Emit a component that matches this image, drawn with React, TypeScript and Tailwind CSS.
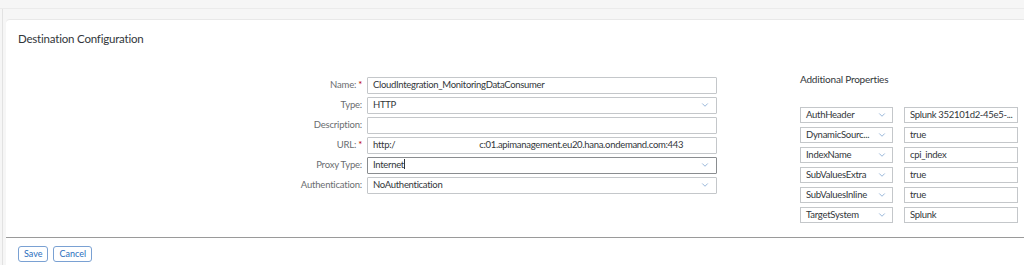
import { ChevronDown } from 'lucide-react'

const FONT = { fontFamily: 'Lato, "Liberation Sans", Arial, sans-serif' }

type Row = { label: string; value: string; required?: boolean; select?: boolean; focus?: boolean }

const ROWS: Row[] = [
  { label: 'Name:', value: 'CloudIntegration_MonitoringDataConsumer', required: true },
  { label: 'Type:', value: 'HTTP', select: true },
  { label: 'Description:', value: '' },
  { label: 'URL:', value: 'url', required: true },
  { label: 'Proxy Type:', value: 'Internet', select: true, focus: true },
  { label: 'Authentication:', value: 'NoAuthentication', select: true },
]

const PROPS: [string, string][] = [
  ['AuthHeader', 'Splunk 352101d2-45e5-...'],
  ['DynamicSourc...', 'true'],
  ['IndexName', 'cpi_index'],
  ['SubValuesExtra', 'true'],
  ['SubValuesInline', 'true'],
  ['TargetSystem', 'Splunk'],
]

function Field({ row }: { row: Row }) {
  return (
    <div className="flex h-[20px] items-center">
      <div className="flex w-[72px] justify-end pr-[5px] text-[9.5px] tracking-[-0.2px] text-[#6a6d70]">
        {row.label}
        {row.required && <span className="ml-[2px] text-[#bb0000]">*</span>}
      </div>
      <div
        className={
          'flex h-[17px] w-[350px] items-center rounded-[1px] border bg-white pl-[5px] pr-[6px] text-[9.5px] tracking-[-0.3px] text-[#32363a] ' +
          (row.focus ? 'border-[#8a8d90]' : 'border-[#c4c7ca]')
        }
      >
        {row.value === 'url' ? (
          <>
            <span>http:/</span>
            <span className="ml-[84px]">c:01.apimanagement.eu20.hana.ondemand.com:443</span>
          </>
        ) : (
          <span>
            {row.value}
            {row.focus && <span className="ml-[0.5px] inline-block h-[10px] w-px translate-y-[1px] bg-[#32363a]" />}
          </span>
        )}
        {row.select && <ChevronDown className="ml-auto size-[10px] text-[#5b8bc4]" strokeWidth={1.5} />}
      </div>
    </div>
  )
}

export default function App() {
  return (
    <div className="h-[265px] w-[1024px] overflow-hidden bg-[#f6f6f6]" style={FONT}>
      <div className="h-[9px] border-b border-[#ebebeb]" />
      <div className="flex h-[256px]">
        <div className="w-[2px]" />
        <div className="w-px bg-[#e2e2e2]" />
        <div className="flex flex-1 flex-col pl-[3px] pt-[10px]">
          <div className="flex flex-1 flex-col rounded-tl-[4px] border-t border-[#e8e8e8] bg-white">
            <div className="px-[12px] pt-[10px] text-[11.5px] tracking-[-0.2px] text-[#32363a]">Destination Configuration</div>

            <div className="flex flex-1">
              <div className="flex flex-col pl-[289px] pt-[28px]">
                {ROWS.map((r) => (
                  <Field key={r.label} row={r} />
                ))}
              </div>

              <div className="flex flex-col pl-[83px] pt-[25px]">
                <div className="text-[10px] tracking-[-0.2px] text-[#32363a]">Additional Properties</div>
                <div className="mt-[18px] flex flex-col">
                  {PROPS.map(([k, v]) => (
                    <div key={k} className="flex h-[20px] items-center gap-[11px]">
                      <div className="flex h-[16px] w-[93px] items-center border border-[#c4c7ca] px-[5px] text-[9.5px] tracking-[-0.25px] text-[#32363a]">
                        <span className="whitespace-nowrap">{k}</span>
                        <ChevronDown className="ml-auto size-[10px] shrink-0 text-[#5b8bc4]" strokeWidth={1.5} />
                      </div>
                      <div className="flex h-[16px] w-[114px] items-center whitespace-nowrap border border-[#c4c7ca] px-[5px] text-[9.5px] tracking-[-0.3px] text-[#32363a]">
                        {v}
                      </div>
                    </div>
                  ))}
                </div>
              </div>
            </div>

            <div className="border-t border-[#9a9a9a]" />
            <div className="flex h-[27px] items-center gap-[5px] pl-[12px] pt-[4px]">
              <button className="h-[16px] rounded-[3px] border border-[#7aa1d3] px-[5px] text-[9px] text-[#2a6ebd]">
                Save
              </button>
              <button className="h-[16px] rounded-[3px] border border-[#7aa1d3] px-[5px] text-[9px] text-[#2a6ebd]">
                Cancel
              </button>
            </div>
          </div>
        </div>
      </div>
    </div>
  )
}
